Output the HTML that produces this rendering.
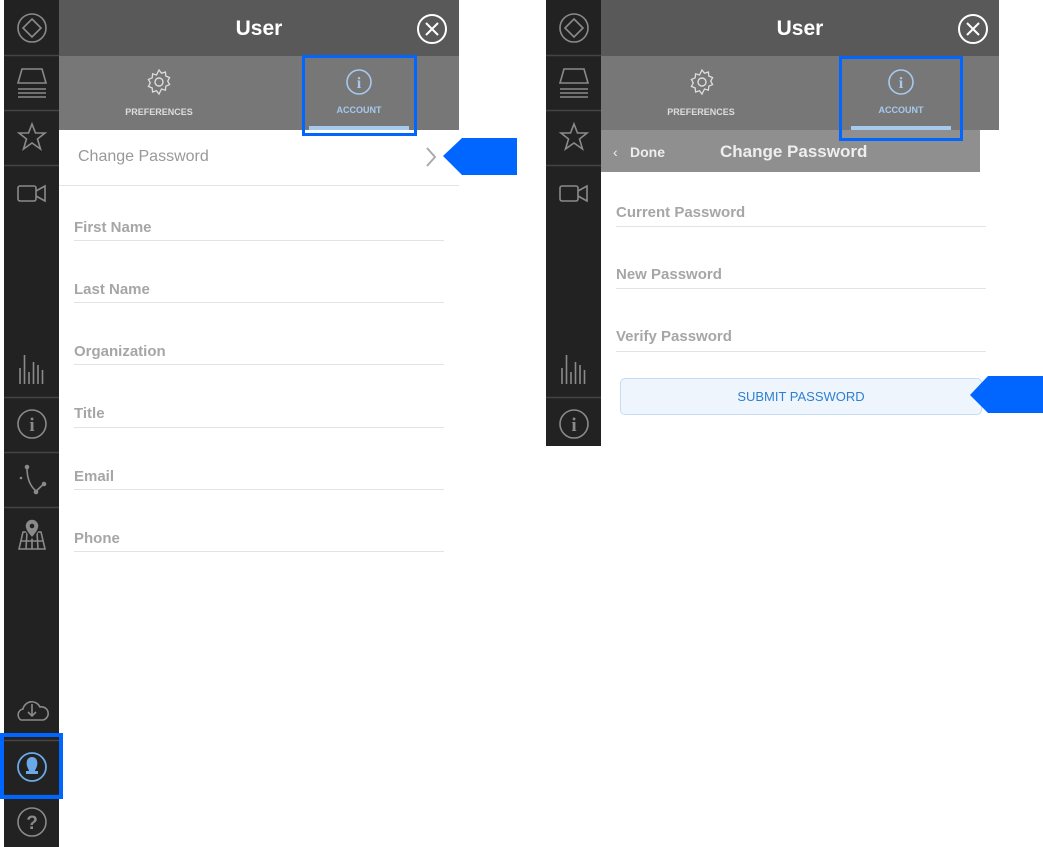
<!DOCTYPE html>
<html><head><meta charset="utf-8"><style>
*{margin:0;padding:0;box-sizing:border-box}
body{width:1043px;height:847px;background:#fff;position:relative;overflow:hidden;font-family:"Liberation Sans",sans-serif}
.a{position:absolute}
.hdr{background:#595959;color:#fff;font-weight:bold;font-size:21px;text-align:center;line-height:58px}
.tabs{background:#777}
.tl{font-size:9px;font-weight:bold;color:#ddd;text-align:center;width:120px}
.field{position:absolute;border-bottom:1px solid #e3e3e3;color:#a6a6a6;font-weight:bold;font-size:15px;height:20px;padding-top:1px}
.box{position:absolute;border:3px solid #0066ff}
</style></head><body>

<!-- LEFT SIDEBAR -->
<svg class="a" style="left:4px;top:0" width="55" height="847" viewBox="4 0 55 847">
<rect x="4" y="0" width="55" height="847" fill="#222"/>
<g stroke="#444" stroke-width="1.5"><line x1="4" y1="55.5" x2="59" y2="55.5"/><line x1="4" y1="110.5" x2="59" y2="110.5"/><line x1="4" y1="165.5" x2="59" y2="165.5"/><line x1="4" y1="397.5" x2="59" y2="397.5"/><line x1="4" y1="452.5" x2="59" y2="452.5"/><line x1="4" y1="507.5" x2="59" y2="507.5"/><line x1="4" y1="740.5" x2="59" y2="740.5"/><line x1="4" y1="795.5" x2="59" y2="795.5"/></g>
<g fill="none" stroke="#8a8a8a" stroke-width="1.6">
<circle cx="32" cy="28" r="14"/><path d="M32 19 L41 28 L32 37 L23 28 Z"/>
<path d="M22 69 H42 L46 83 H18 Z"/><line x1="18" y1="89" x2="46" y2="89"/><line x1="18" y1="93" x2="46" y2="93"/><line x1="18" y1="97" x2="46" y2="97"/>
<path d="M32 124 L35.5 133 L45 133 L37.5 139 L40.5 149 L32 143 L23.5 149 L26.5 139 L19 133 L28.5 133 Z"/>
<rect x="18" y="186" width="18" height="15" rx="2"/><path d="M36 191 L45 186 V201 L36 196"/>
<path d="M20 384 V368 M24.5 384 V355 M29 384 V372 M33.5 384 V362 M38 384 V365 M42.5 384 V370"/>
<circle cx="32" cy="424" r="14"/>
<circle cx="32" cy="822" r="14"/>
<path d="M21 720 a6 6 0 0 1 2-11 a9 9 0 0 1 17-2 a6.5 6.5 0 0 1 3 13 Z"/><path d="M32 704 V716 M28 712 L32 716 L36 712"/>
<path d="M27 468 C27 478 30 486 36 491 M36 491 C40 488 42 485 44 484"/>
<path d="M19 549 L23 532 H41 L45 549 Z M21 541 H43 M27 532 L26 549 M37 532 L38 549 M32 538 V549"/>
</g>
<g fill="#8a8a8a"><circle cx="27" cy="467" r="2.3"/><circle cx="36" cy="492" r="2.3"/><circle cx="44" cy="484" r="2.3"/><circle cx="21" cy="478" r="1.3"/>
<path d="M32 519 a7 7 0 0 1 7 7 c0 5 -7 12 -7 12 c0 0 -7 -7 -7 -12 a7 7 0 0 1 7 -7z" stroke="#222" stroke-width="1.5"/>
<text x="32" y="431" font-family="Liberation Serif" font-weight="bold" font-size="19" text-anchor="middle">i</text>
<text x="32" y="829" font-family="Liberation Sans" font-weight="bold" font-size="19" text-anchor="middle">?</text></g>
<circle cx="32" cy="526" r="2.3" fill="#222"/>
<circle cx="32" cy="767" r="14" fill="none" stroke="#6aa9e6" stroke-width="1.8"/>
<path d="M32 757 c5 0 6 5 5 9 c-1 3 -2 4 -2 5 h3 v3 h-12 v-3 h3 c0 -1 -1 -2 -2 -5 c-1 -4 0 -9 5 -9z" fill="#6aa9e6"/>
</svg>

<!-- LEFT PANEL -->
<div class="a hdr" style="left:59px;top:0;width:400px;height:56px">User</div>
<svg class="a" style="left:416px;top:13px" width="32" height="32"><circle cx="16" cy="16" r="14" fill="none" stroke="#fff" stroke-width="2"/><path d="M10 10 L22 22 M22 10 L10 22" stroke="#fff" stroke-width="2"/></svg>
<div class="a tabs" style="left:59px;top:56px;width:400px;height:74px"></div>
<svg class="a" style="left:145px;top:68px" width="28" height="28" viewBox="0 0 28 28"><path d="M14 2 l2.5 3.2 3.9-1.2 .4 4 3.8 1.6 -1.9 3.5 1.9 3.5 -3.8 1.6 -.4 4 -3.9-1.2 L14 26 l-2.5-3.2 -3.9 1.2 -.4-4 -3.8-1.6 1.9-3.5 -1.9-3.5 3.8-1.6 .4-4 3.9 1.2 Z" fill="none" stroke="#ddd" stroke-width="1.3"/><circle cx="14" cy="14" r="4" fill="none" stroke="#ddd" stroke-width="1.4"/></svg>
<div class="a tl" style="left:99px;top:107px">PREFERENCES</div>
<svg class="a" style="left:345px;top:69px" width="28" height="28"><circle cx="14" cy="13" r="12" fill="none" stroke="#a6c9ee" stroke-width="1.6"/><text x="14" y="19" font-family="Liberation Serif" font-weight="bold" font-size="16" fill="#a6c9ee" text-anchor="middle">i</text></svg>
<div class="a tl" style="left:299px;top:105px;color:#a6c9ee">ACCOUNT</div>
<div class="a" style="left:309px;top:126px;width:100px;height:4px;background:#a6c9ee"></div>
<div class="box" style="left:302px;top:55px;width:115px;height:81px"></div>

<div class="a" style="left:59px;top:130px;width:400px;height:56px;border-bottom:1px solid #e3e3e3"></div>
<div class="a" style="left:78px;top:148px;font-size:16px;color:#999">Change Password</div>
<svg class="a" style="left:424px;top:146px" width="14" height="22"><path d="M3 2 L11 11 L3 20" fill="none" stroke="#aaa" stroke-width="2"/></svg>
<svg class="a" style="left:443px;top:137px" width="75" height="39"><path d="M0 19 L19 1 H74 V38 H19 Z" fill="#0066ff"/></svg>

<div class="field" style="left:74px;top:218px;width:370px;height:23px">First Name</div>
<div class="field" style="left:74px;top:280px;width:370px;height:23px">Last Name</div>
<div class="field" style="left:74px;top:342px;width:370px;height:23px">Organization</div>
<div class="field" style="left:74px;top:404px;width:370px;height:24px">Title</div>
<div class="field" style="left:74px;top:467px;width:370px;height:23px">Email</div>
<div class="field" style="left:74px;top:529px;width:370px;height:23px">Phone</div>

<div class="box" style="left:0;top:733px;width:63px;height:66px;border-width:4px"></div>

<!-- RIGHT SIDEBAR -->
<svg class="a" style="left:546px;top:0" width="55" height="446" viewBox="4 0 55 446">
<rect x="4" y="0" width="55" height="446" fill="#222"/>
<g stroke="#444" stroke-width="1.5"><line x1="4" y1="55.5" x2="59" y2="55.5"/><line x1="4" y1="110.5" x2="59" y2="110.5"/><line x1="4" y1="165.5" x2="59" y2="165.5"/><line x1="4" y1="397.5" x2="59" y2="397.5"/></g>
<g fill="none" stroke="#8a8a8a" stroke-width="1.6">
<circle cx="32" cy="28" r="14"/><path d="M32 19 L41 28 L32 37 L23 28 Z"/>
<path d="M22 69 H42 L46 83 H18 Z"/><line x1="18" y1="89" x2="46" y2="89"/><line x1="18" y1="93" x2="46" y2="93"/><line x1="18" y1="97" x2="46" y2="97"/>
<path d="M32 124 L35.5 133 L45 133 L37.5 139 L40.5 149 L32 143 L23.5 149 L26.5 139 L19 133 L28.5 133 Z"/>
<rect x="18" y="186" width="18" height="15" rx="2"/><path d="M36 191 L45 186 V201 L36 196"/>
<path d="M20 384 V368 M24.5 384 V355 M29 384 V372 M33.5 384 V362 M38 384 V365 M42.5 384 V370"/>
<circle cx="32" cy="424" r="14"/>
</g>
<text x="32" y="431" font-family="Liberation Serif" font-weight="bold" font-size="19" fill="#8a8a8a" text-anchor="middle">i</text>
</svg>

<!-- RIGHT PANEL -->
<div class="a hdr" style="left:601px;top:0;width:398px;height:56px">User</div>
<svg class="a" style="left:957px;top:13px" width="32" height="32"><circle cx="16" cy="16" r="14" fill="none" stroke="#fff" stroke-width="2"/><path d="M10 10 L22 22 M22 10 L10 22" stroke="#fff" stroke-width="2"/></svg>
<div class="a tabs" style="left:601px;top:56px;width:398px;height:74px"></div>
<svg class="a" style="left:688px;top:68px" width="28" height="28" viewBox="0 0 28 28"><path d="M14 2 l2.5 3.2 3.9-1.2 .4 4 3.8 1.6 -1.9 3.5 1.9 3.5 -3.8 1.6 -.4 4 -3.9-1.2 L14 26 l-2.5-3.2 -3.9 1.2 -.4-4 -3.8-1.6 1.9-3.5 -1.9-3.5 3.8-1.6 .4-4 3.9 1.2 Z" fill="none" stroke="#ddd" stroke-width="1.3"/><circle cx="14" cy="14" r="4" fill="none" stroke="#ddd" stroke-width="1.4"/></svg>
<div class="a tl" style="left:641px;top:107px">PREFERENCES</div>
<svg class="a" style="left:887px;top:69px" width="28" height="28"><circle cx="14" cy="13" r="12" fill="none" stroke="#a6c9ee" stroke-width="1.6"/><text x="14" y="19" font-family="Liberation Serif" font-weight="bold" font-size="16" fill="#a6c9ee" text-anchor="middle">i</text></svg>
<div class="a tl" style="left:841px;top:105px;color:#a6c9ee">ACCOUNT</div>
<div class="a" style="left:851px;top:126px;width:100px;height:4px;background:#a6c9ee"></div>

<div class="a" style="left:601px;top:130px;width:379px;height:42px;background:#8f8f8f"></div>
<div class="box" style="left:839px;top:56px;width:124px;height:85px"></div>
<div class="a" style="left:613px;top:144px;font-size:14px;color:#eee">&#8249;</div>
<div class="a" style="left:630px;top:144px;font-size:14px;font-weight:bold;color:#eee">Done</div>
<div class="a" style="left:720px;top:142px;font-size:17px;font-weight:bold;color:#eee">Change Password</div>

<div class="field" style="left:616px;top:203px;width:370px;height:24px">Current Password</div>
<div class="field" style="left:616px;top:265px;width:370px;height:24px">New Password</div>
<div class="field" style="left:616px;top:327px;width:370px;height:25px">Verify Password</div>

<div class="a" style="left:620px;top:378px;width:362px;height:37px;background:#eef5fd;border:1px solid #c6dcf4;border-radius:5px;color:#2f7fd0;font-size:13px;text-align:center;line-height:35px">SUBMIT PASSWORD</div>
<svg class="a" style="left:970px;top:376px" width="73" height="38"><path d="M0 19 L18 0 H73 V37 H18 Z" fill="#0066ff"/></svg>
</body></html>
